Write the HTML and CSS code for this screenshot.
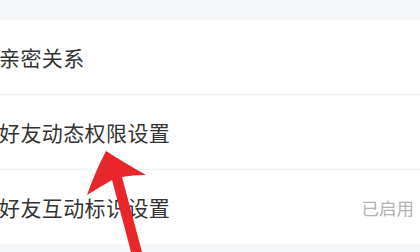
FILE: index.html
```html
<!DOCTYPE html>
<html lang="zh-CN">
<head>
<meta charset="utf-8">
<link rel="stylesheet" href="styles.css">
</head>
<body>
<div class="page">
  <div class="band"></div>
  <div class="list">
    <div class="row"><span class="label">亲密关系</span></div>
    <div class="row"><span class="label">好友动态权限设置</span></div>
    <div class="row"><span class="label">好友互动标识设置</span><span class="value">已启用</span></div>
  </div>
  <div class="band bottom"></div>
  <svg class="arrow" width="420" height="252" viewBox="0 0 420 252">
    <path d="M106 151 Q123 162 146 175 Q132 175 122 177 L142 252 L131 252 L112 180 Q100 187 87 195 Q95 172 106 151 Z" fill="#e8262b"/>
  </svg>
</div>
</body>
</html>
```
FILE: styles.css
```css
html, body {
  margin: 0;
  padding: 0;
  background: #f5f6f8;
}
.page {
  position: relative;
  width: 420px;
  height: 252px;
  overflow: hidden;
  font-family: "Noto Sans CJK SC", "Noto Sans", sans-serif;
}
.band {
  height: 20px;
  background: #f5f6f8;
}
.band.bottom {
  height: 12px;
}
.list {
  background: #ffffff;
}
.row {
  height: 74px;
  border-bottom: 1px solid #f0f0f2;
  display: flex;
  align-items: center;
  justify-content: space-between;
  padding: 0 6px 0 0;
}
.row:last-child {
  border-bottom: none;
}
.label {
  font-size: 21px;
  color: #333333;
  letter-spacing: 0.4px;
  margin-left: -1px;
}
.value {
  font-size: 17.5px;
  color: #b2b2b2;
}
.arrow {
  position: absolute;
  left: 0;
  top: 0;
}
```
